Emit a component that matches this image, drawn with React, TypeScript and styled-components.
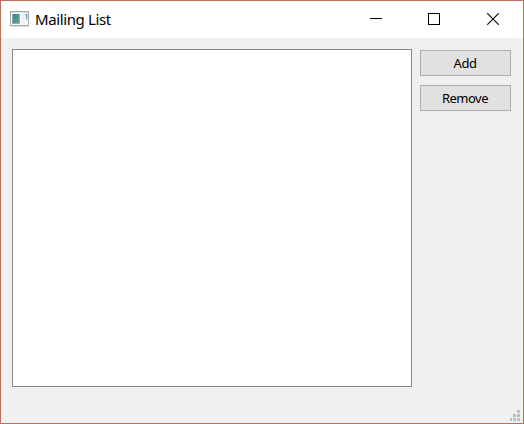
import React from "react";
import styled, { createGlobalStyle } from "styled-components";

const GlobalStyle = createGlobalStyle`
  body { margin: 0; }
  * { box-sizing: border-box; }
`;

const Window = styled.div`
  width: 524px;
  height: 424px;
  display: flex;
  flex-direction: column;
  border: 1px solid #ba7157;
  background: #f0f0f0;
  color: #000;
  font-family: "Noto Sans", "Open Sans", sans-serif;
  overflow: hidden;
`;

const TitleBar = styled.header`
  flex: none;
  display: flex;
  align-items: flex-start;
  height: 37px;
  padding: 10px 24px 0 9px;
  background: #fff;
`;

const Title = styled.h1`
  flex: 1;
  margin: -2px 0 0 6px;
  font-size: 15px;
  font-weight: 400;
  line-height: 20px;
  letter-spacing: -0.38px;
  white-space: nowrap;
`;

const Controls = styled.div`
  display: flex;
  padding-top: 2px;
`;

const Control = styled.button<{ $gap?: number }>`
  display: block;
  padding: 0;
  margin: 0 ${(p) => p.$gap ?? 0}px 0 0;
  border: 0;
  background: none;
  width: 12px;
  height: 12px;

  svg { display: block; }
`;

const Content = styled.main`
  flex: 1;
  display: flex;
  align-items: flex-start;
  gap: 8px;
  padding: 11px 12px 0 11px;
`;

const List = styled.div`
  width: 400px;
  height: 338px;
  border: 1px solid #828790;
  background: #fff;
`;

const Actions = styled.div`
  display: flex;
  flex-direction: column;
  gap: 9px;
  padding-top: 1px;
`;

const ActionButton = styled.button`
  width: 91px;
  height: 26px;
  padding: 0 1px 1px 0;
  border: 1px solid #adadad;
  border-radius: 0;
  background: #e1e1e1;
  color: #000;
  font-family: inherit;
  font-size: 13px;
  line-height: 16px;
  letter-spacing: -0.5px;
`;

const StatusBar = styled.footer`
  flex: none;
  display: flex;
  justify-content: flex-end;
  padding: 0 3px 2px 0;

  svg { display: block; }
`;

const AppIcon = () => (
  <svg width="19" height="16" viewBox="0 0 19 16">
    <defs>
      <linearGradient id="pane" x1="0" y1="0" x2="1" y2="1">
        <stop offset="0" stopColor="#4778a8" />
        <stop offset="1" stopColor="#58ae78" />
      </linearGradient>
      <linearGradient id="bar" x1="0" y1="0" x2="0" y2="1">
        <stop offset="0" stopColor="#4b78bd" />
        <stop offset="1" stopColor="#9bd0ab" />
      </linearGradient>
    </defs>
    <rect x="0.5" y="0.5" width="18" height="14" fill="#f8f9f9" stroke="#a5abb0" />
    <path d="M0 15.5H19" stroke="#dcdedf" />
    <rect x="1" y="1" width="17" height="1" fill="#dde0e3" />
    <rect x="2" y="3" width="8" height="10" fill="#8fb3b8" />
    <rect x="3" y="3" width="6" height="9" fill="url(#pane)" />
    <rect x="11" y="3" width="4" height="10" fill="#f0f1f2" />
    <rect x="16" y="3" width="1" height="6" fill="url(#bar)" />
    <rect x="17" y="3" width="1" height="6" fill="url(#bar)" opacity="0.35" />
  </svg>
);

const SizeGrip = () => (
  <svg width="10" height="11" viewBox="0 0 10 11" fill="#bfbfbf" shapeRendering="crispEdges">
    <path d="M7 0h3v3h-3zM3 4h3v3h-3zM7 4h3v3h-3zM0 8h2v3h-2zM3 8h3v3h-3zM7 8h3v3h-3z" />
  </svg>
);

export default function App() {
  return (
    <Window>
      <GlobalStyle />
      <TitleBar>
        <AppIcon />
        <Title>Mailing List</Title>
        <Controls>
          <Control aria-label="Minimize" $gap={46}>
            <svg width="12" height="12"><path d="M0 5.5H12" stroke="#000" /></svg>
          </Control>
          <Control aria-label="Maximize" $gap={47}>
            <svg width="12" height="12"><rect x="0.5" y="0.5" width="11" height="11" fill="none" stroke="#000" /></svg>
          </Control>
          <Control aria-label="Close">
            <svg width="12" height="12"><path d="M0.2 0.2L11.8 11.8M11.8 0.2L0.2 11.8" stroke="#000" strokeWidth="1.1" /></svg>
          </Control>
        </Controls>
      </TitleBar>
      <Content>
        <List role="listbox" />
        <Actions>
          <ActionButton>Add</ActionButton>
          <ActionButton>Remove</ActionButton>
        </Actions>
      </Content>
      <StatusBar>
        <SizeGrip />
      </StatusBar>
    </Window>
  );
}
